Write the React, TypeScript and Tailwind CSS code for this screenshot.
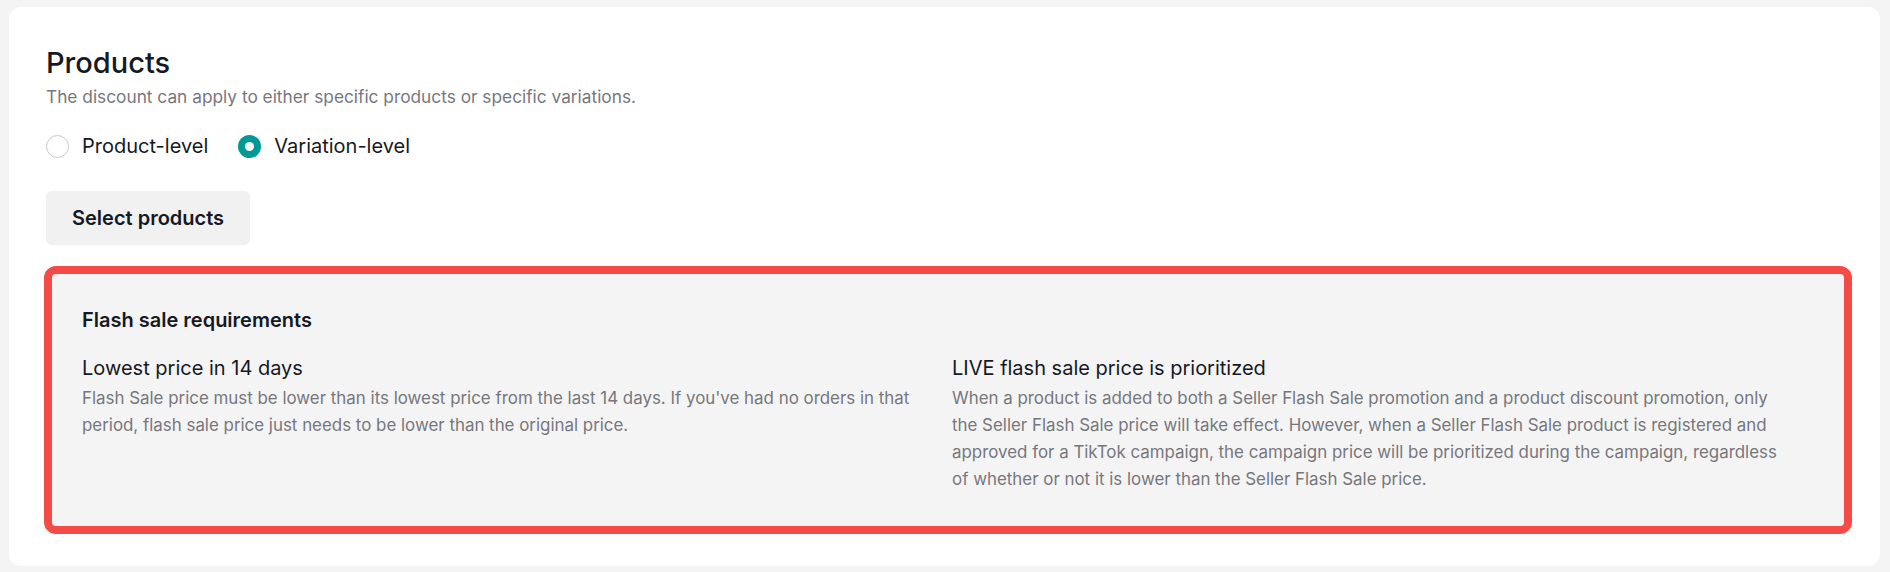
import React, { useState } from 'react';

// lines kept as in the design so the copy wraps the same way
const requirements = [
  {
    title: 'Lowest price in 14 days',
    lines: [
      "Flash Sale price must be lower than its lowest price from the last 14 days. If you've had no orders in that period, flash sale price just needs to be lower than the original price.",
    ],
  },
  {
    title: 'LIVE flash sale price is prioritized',
    lines: [
      'When a product is added to both a Seller Flash Sale promotion and a product discount promotion, only',
      'the Seller Flash Sale price will take effect. However, when a Seller Flash Sale product is registered and',
      'approved for a TikTok campaign, the campaign price will be prioritized during the campaign, regardless',
      'of whether or not it is lower than the Seller Flash Sale price.',
    ],
  },
];

const Radio: React.FC<{ label: string; checked: boolean; onSelect: () => void }> = ({ label, checked, onSelect }) => (
  <button type="button" onClick={onSelect} className="flex items-center gap-[13px] h-[28px]">
    {checked ? (
      <span className="w-[23px] h-[23px] rounded-full bg-[#009995] flex items-center justify-center">
        <span className="w-[9px] h-[9px] rounded-full bg-white" />
      </span>
    ) : (
      <span className="w-[23px] h-[23px] rounded-full border border-[#c9c9cc] bg-white" />
    )}
    <span className="text-[20px] leading-[28px] text-[#161823]">{label}</span>
  </button>
);

export default function App() {
  const [level, setLevel] = useState<'product' | 'variation'>('variation');

  return (
    <div className="min-h-[572px] bg-[#f4f4f5] pt-[7px] pl-[9px] pr-[10px] pb-[7px] font-['Inter','Liberation_Sans',sans-serif]">
      <div className="bg-white rounded-[12px] pt-[38px] pl-[37px] pr-[28px] pb-[32px]">
        {/* header */}
        <h2 className="text-[29px] leading-[36px] font-medium text-[#161823]">Products</h2>
        <p className="mt-[4px] text-[17.3px] leading-[24px] text-[#76777c]">
          The discount can apply to either specific products or specific variations.
        </p>

        <div className="mt-[23px] flex items-center gap-[30px]">
          <Radio label="Product-level" checked={level === 'product'} onSelect={() => setLevel('product')} />
          <Radio label="Variation-level" checked={level === 'variation'} onSelect={() => setLevel('variation')} />
        </div>

        <button
          type="button"
          className="mt-[31px] h-[54px] px-[26px] rounded-[6px] bg-[#f1f1f2] text-[20px] font-semibold text-[#161823]"
        >
          Select products
        </button>

        {/* requirements box */}
        <div className="mt-[21px] -ml-[2px] border-[8px] border-[#f44b47] rounded-[12px] bg-[#f4f4f5] pt-[32px] pb-[33px] px-[30px]">
          <h3 className="text-[20px] leading-[28px] font-semibold text-[#161823]">Flash sale requirements</h3>
          <div className="mt-[20px] grid grid-cols-2 gap-x-[8px]">
            {requirements.map((r) => (
              <div key={r.title}>
                <h4 className="text-[20px] leading-[28px] text-[#161823]">{r.title}</h4>
                <p className="mt-[3px] text-[16.9px] leading-[27px] text-[#76777c]">
                  {r.lines.map((l, i) => (
                    <React.Fragment key={i}>
                      {i > 0 && <br />}
                      {l}
                    </React.Fragment>
                  ))}
                </p>
              </div>
            ))}
          </div>
        </div>
      </div>
    </div>
  );
}
